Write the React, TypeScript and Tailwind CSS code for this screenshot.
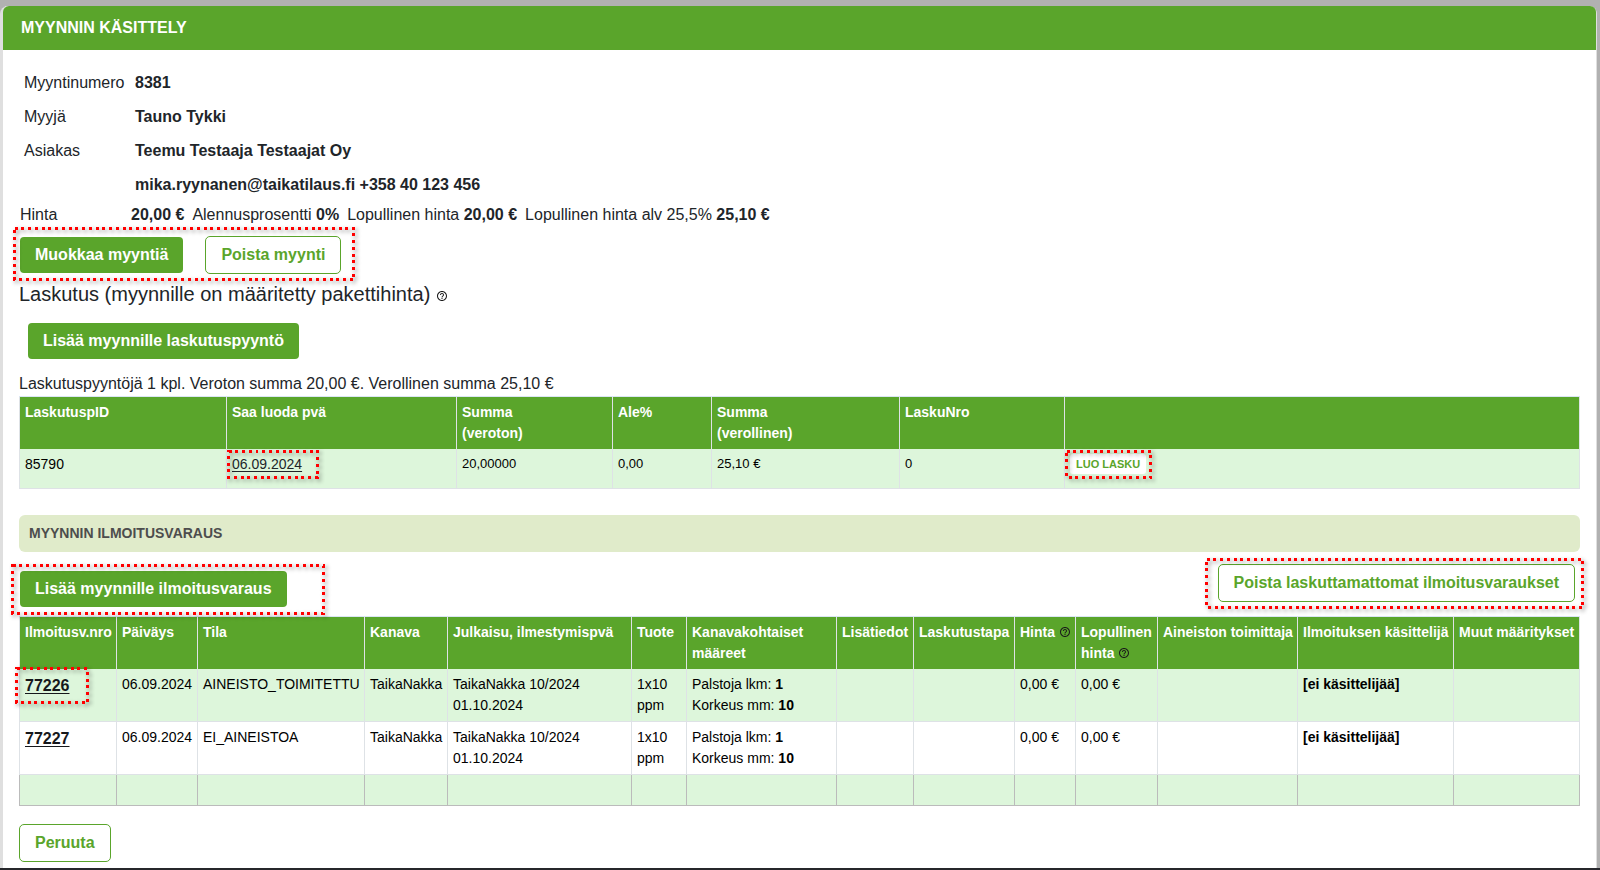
import type { ReactNode } from "react";
import { MdHelpOutline } from "react-icons/md";

function Button({ outline = false, children }: { outline?: boolean; children: ReactNode }) {
  const look = outline
    ? "border-[#5aa52b] bg-white text-[#5aa52b]"
    : "border-transparent bg-[#5aa52b] bg-clip-padding text-white";
  return (
    <button
      type="button"
      className={`h-[38px] rounded-[5px] border px-[15px] text-base leading-6 font-bold whitespace-nowrap ${look}`}
    >
      {children}
    </button>
  );
}

/* Dotted red marker that lies over the content it surrounds. */
function Marker({ className }: { className: string }) {
  return (
    <span aria-hidden="true" className={`pointer-events-none absolute block ${className}`}>
      <svg className="block h-full w-full overflow-visible drop-shadow-[2px_2px_2px_rgba(0,0,0,0.45)]">
        <rect
          x="1.5"
          y="1.5"
          className="h-[calc(100%-3px)] w-[calc(100%-3px)]"
          fill="none"
          stroke="#f00"
          strokeWidth="3"
          strokeDasharray="3 3.75"
          shapeRendering="crispEdges"
        />
      </svg>
    </span>
  );
}

function Help() {
  return <MdHelpOutline title="Ohje" className="inline-block size-3 align-[-1px] text-[#1b1b1b]" />;
}

function Th({ className = "", children }: { className?: string; children?: ReactNode }) {
  return (
    <th
      scope="col"
      className={`h-[52px] border-r border-[#dee2e6] bg-[#5aa52b] px-[5px] py-[5px] text-left align-top font-bold whitespace-nowrap text-white first:border-l ${className}`}
    >
      {children}
    </th>
  );
}

const cell = "border-r border-b border-[#dee2e6] px-[5px] py-[5px] align-top first:border-l";
const smallCell = `${cell} text-[13px] leading-[19px]`;
const emptyCell = "h-[31px] border-r border-b border-[#bbbbbb] first:border-l";
const tableLook = "w-full table-fixed border-separate border-spacing-0 border-t border-[#dbe6f4] text-sm leading-[21px] text-black";

const details = [
  { label: "Myyntinumero", value: "8381" },
  { label: "Myyjä", value: "Tauno Tykki" },
  { label: "Asiakas", value: "Teemu Testaaja Testaajat Oy" },
  { label: "", value: "mika.ryynanen@taikatilaus.fi +358 40 123 456" },
];

const reservations = [
  { id: "77226", date: "06.09.2024", state: "AINEISTO_TOIMITETTU", row: "bg-[#ddf6db]", marked: true },
  { id: "77227", date: "06.09.2024", state: "EI_AINEISTOA", row: "bg-white", marked: false },
];

export default function App() {
  return (
    <div className="bg-[#b1b1b1] pt-1.5 pr-[3px] font-['Liberation_Sans',Arial,sans-serif] text-base leading-6 text-[#212529]">
      <main className="rounded-t-lg border-r border-l-3 border-[#dfdfdf] bg-white pb-1.5">
        <h1 className="h-11 rounded-t-md bg-[#5aa52b] px-[18px] py-2.5 font-bold text-white">MYYNNIN KÄSITTELY</h1>

        <div className="px-4 pt-4">
          <dl>
            {details.map((d) => (
              <div key={d.value} className="flex h-[34px] items-center px-[5px]">
                <dt className="w-[111px]">{d.label}</dt>
                <dd className="font-bold">{d.value}</dd>
              </div>
            ))}
          </dl>

          <div className="flex pt-px pl-px">
            <span className="w-[111px]">Hinta</span>
            <div className="flex gap-2">
              <b>20,00 €</b>
              <span>Alennusprosentti <b>0%</b></span>
              <span>Lopullinen hinta <b>20,00 €</b></span>
              <span>Lopullinen hinta alv 25,5% <b>25,10 €</b></span>
            </div>
          </div>

          <div className="mt-[9px] flex">
            <div className="relative flex gap-[21px]">
              <Button>Muokkaa myyntiä</Button>
              <Button outline>Poista myynti</Button>
              <Marker className="-top-[9px] -right-3.5 -bottom-[7px] -left-1.5" />
            </div>
          </div>

          <h2 className="mt-[5px] text-xl leading-[30px]">
            Laskutus (myynnille on määritetty pakettihinta) <Help />
          </h2>
          <div className="mt-[13px] ml-2 flex">
            <Button>Lisää myynnille laskutuspyyntö</Button>
          </div>

          <p className="mt-3">Laskutuspyyntöjä 1 kpl. Veroton summa 20,00 €. Verollinen summa 25,10 €</p>
          <table className={tableLook}>
            <thead>
              <tr>
                <Th className="w-[208px]">LaskutuspID</Th>
                <Th className="w-[230px]">Saa luoda pvä</Th>
                <Th className="w-[156px]">Summa<br />(veroton)</Th>
                <Th className="w-[99px]">Ale%</Th>
                <Th className="w-[188px]">Summa<br />(verollinen)</Th>
                <Th className="w-[165px]">LaskuNro</Th>
                <Th />
              </tr>
            </thead>
            <tbody>
              <tr className="h-10 bg-[#ddf6db]">
                <td className={cell}>85790</td>
                <td className={`${cell} relative`}>
                  <a href="#pvm" className="text-[#212529] underline underline-offset-2">06.09.2024</a>
                  <Marker className="top-px left-0 h-[29px] w-[92px]" />
                </td>
                <td className={smallCell}>20,00000</td>
                <td className={smallCell}>0,00</td>
                <td className={smallCell}>25,10 €</td>
                <td className={smallCell}>0</td>
                <td className={`${cell} relative`}>
                  <button
                    type="button"
                    className="block h-5 rounded-[3px] bg-white px-1.5 text-[11px] leading-5 font-bold text-[#5aa52b]"
                  >
                    LUO LASKU
                  </button>
                  <Marker className="top-px left-0 h-[29px] w-[87px]" />
                </td>
              </tr>
            </tbody>
          </table>

          <h2 className="mt-[26px] h-[37px] rounded-md bg-[#e0ebca] px-2.5 text-sm leading-[37px] font-bold text-[#4d4d4d]">
            MYYNNIN ILMOITUSVARAUS
          </h2>

          <div className="flex items-start justify-between pt-3 pb-2">
            <div className="relative mt-1.5 flex">
              <Button>Lisää myynnille ilmoitusvaraus</Button>
              <Marker className="-top-1.5 -right-[37px] -bottom-[7px] -left-2" />
            </div>
            <div className="relative mr-[5px] flex">
              <Button outline>Poista laskuttamattomat ilmoitusvaraukset</Button>
              <Marker className="-top-1.5 -right-[9px] -bottom-[7px] -left-[13px]" />
            </div>
          </div>

          <table className={tableLook}>
            <thead>
              <tr>
                <Th className="w-[98px]">Ilmoitusv.nro</Th>
                <Th className="w-[81px]">Päiväys</Th>
                <Th className="w-[167px]">Tila</Th>
                <Th className="w-[83px]">Kanava</Th>
                <Th className="w-[184px]">Julkaisu, ilmestymispvä</Th>
                <Th className="w-[55px]">Tuote</Th>
                <Th className="w-[150px]">Kanavakohtaiset<br />määreet</Th>
                <Th className="w-[77px]">Lisätiedot</Th>
                <Th className="w-[101px]">Laskutustapa</Th>
                <Th className="w-[61px]">Hinta <Help /></Th>
                <Th className="w-[82px]">Lopullinen<br />hinta <Help /></Th>
                <Th className="w-[140px]">Aineiston toimittaja</Th>
                <Th className="w-[156px]">Ilmoituksen käsittelijä</Th>
                <Th>Muut määritykset</Th>
              </tr>
            </thead>
            <tbody>
              {reservations.map((r) => (
                <tr key={r.id} className={`h-[53px] ${r.row}`}>
                  <td className={`${cell} relative`}>
                    <a
                      href={`#${r.id}`}
                      className="block text-base leading-6 font-bold text-[#16181b] underline underline-offset-2"
                    >
                      {r.id}
                    </a>
                    {r.marked && <Marker className="-top-0.5 -left-[5px] h-[37px] w-[74px]" />}
                  </td>
                  <td className={cell}>{r.date}</td>
                  <td className={cell}>{r.state}</td>
                  <td className={cell}>TaikaNakka</td>
                  <td className={cell}>TaikaNakka 10/2024<br />01.10.2024</td>
                  <td className={cell}>1x10<br />ppm</td>
                  <td className={cell}>Palstoja lkm: <b>1</b><br />Korkeus mm: <b>10</b></td>
                  <td className={cell} />
                  <td className={cell} />
                  <td className={cell}>0,00 €</td>
                  <td className={cell}>0,00 €</td>
                  <td className={cell} />
                  <td className={`${cell} font-bold`}>[ei käsittelijää]</td>
                  <td className={cell} />
                </tr>
              ))}
              <tr className="bg-[#ddf6db]">
                {Array.from({ length: 14 }, (_, i) => (
                  <td key={i} className={emptyCell} />
                ))}
              </tr>
            </tbody>
          </table>

          <div className="mt-[18px] flex">
            <Button outline>Peruuta</Button>
          </div>
        </div>
      </main>
      <div className="-mr-[3px] h-0.5 bg-[#26272b]" />
    </div>
  );
}
